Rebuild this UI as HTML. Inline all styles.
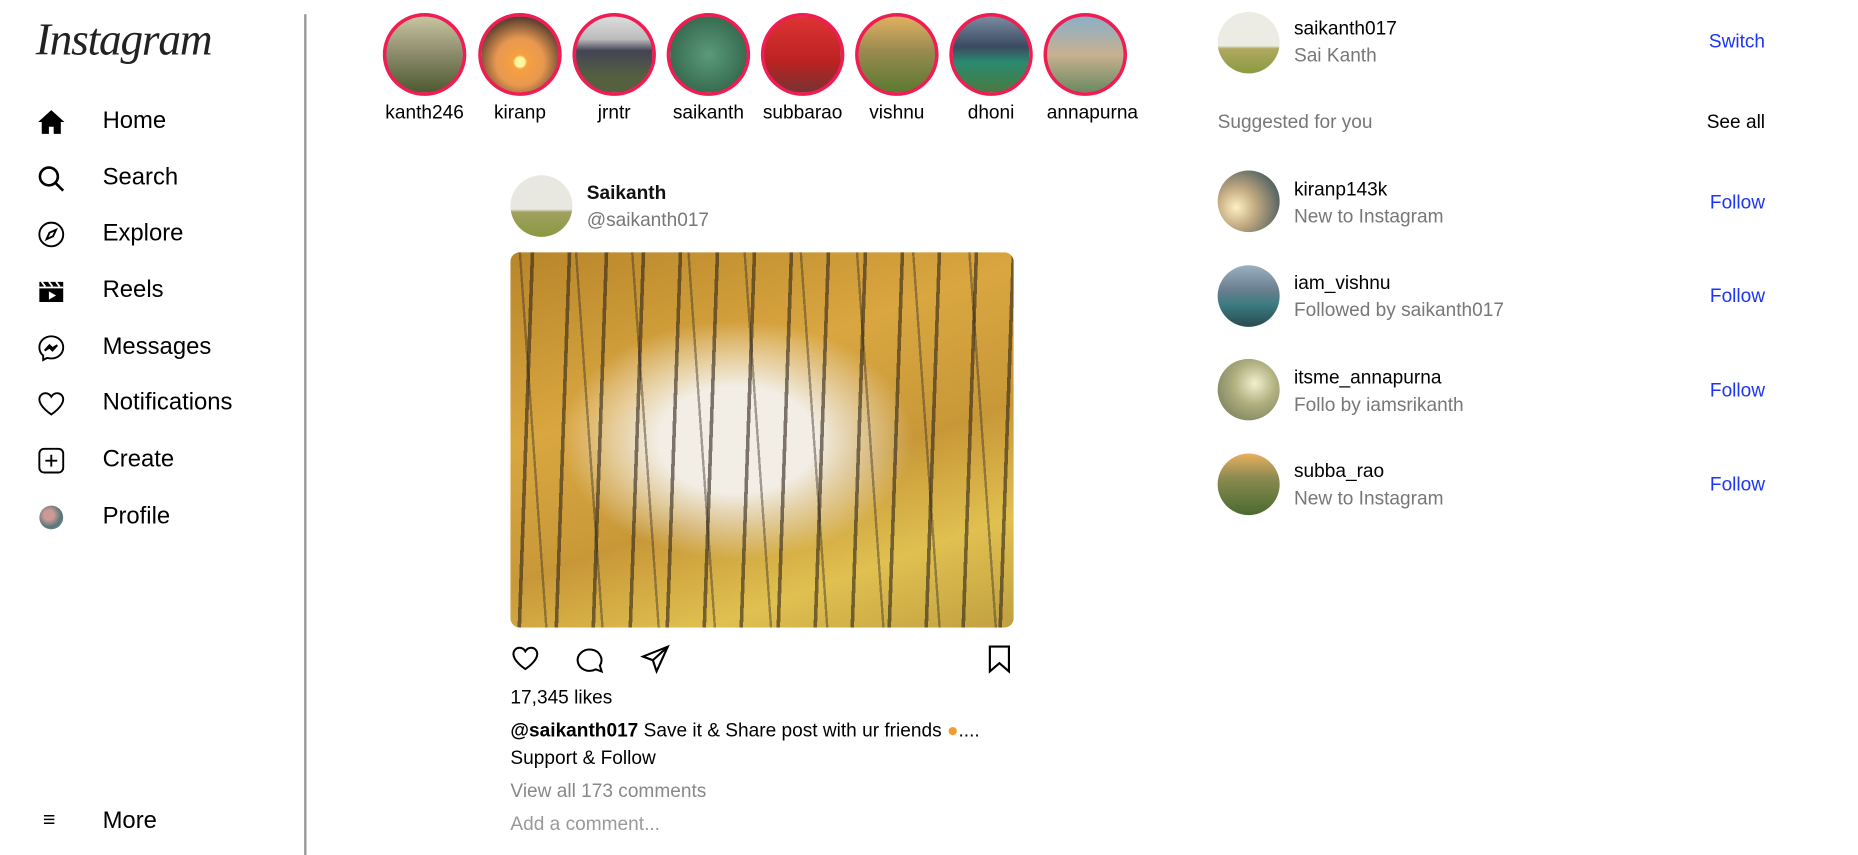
<!DOCTYPE html>
<html><head><meta charset="utf-8"><style>
html,body{margin:0;padding:0;background:#fff;width:1858px;height:855px;overflow:hidden}
#w{position:absolute;left:0;top:0;width:1558px;height:722px;transform:scale(1.1926,1.1842);transform-origin:0 0;font-family:"Liberation Sans",sans-serif;color:#000}
.a{position:absolute;white-space:nowrap}
.nav{font-size:20px;left:86px}
.ic{position:absolute;left:31px;width:24px;height:24px}
.st{position:absolute;top:11px;width:64px;height:64px;border-radius:50%;border:3px solid #ee1d52}
.sl{position:absolute;top:87px;font-size:16px;width:80px;text-align:center}
.f{font-family:"Liberation Sans",sans-serif}
.av{position:absolute;width:52px;height:52px;border-radius:50%}
.nm{font-size:16px;font-weight:bold;color:#111}
.sb{font-size:16px;color:#777}
.bl{font-size:16px;color:#1d35f5;right:78px}
</style></head><body><div id="w">
<div class="a" style="left:30px;top:12px;font-family:'Liberation Serif',serif;font-style:italic;font-size:38px;color:#222;letter-spacing:-1px">Instagram</div>
<div style="position:absolute;left:255px;top:12px;width:2px;height:710px;background:#999"></div>

<svg class="ic" style="top:91px" viewBox="0 0 24 24"><path d="M12 2L1 12h3v10h6v-6h4v6h6V12h3z"/></svg>
<div class="a nav" style="top:91px">Home</div>
<svg class="ic" style="top:139px" viewBox="0 0 24 24" fill="none" stroke="#000" stroke-width="2.2"><circle cx="10" cy="10" r="7.5"/><path d="M15.5 15.5L22 22"/></svg>
<div class="a nav" style="top:139px">Search</div>
<svg class="ic" style="top:186px" viewBox="0 0 24 24" fill="none" stroke="#000" stroke-width="1.6"><circle cx="12" cy="12" r="10"/><path d="M16 8l-2.5 5.5L8 16l2.5-5.5z"/></svg>
<div class="a nav" style="top:186px">Explore</div>
<svg class="ic" style="top:234px" viewBox="0 0 24 24"><path d="M2 4h20v17H2z"/><path d="M4 4l3 4M10 4l3 4M16 4l3 4" stroke="#fff" stroke-width="1.5"/><rect x="2" y="8" width="20" height="1.5" fill="#fff"/><path d="M10 12v7l6-3.5z" fill="#fff"/></svg>
<div class="a nav" style="top:234px">Reels</div>
<svg class="ic" style="top:282px" viewBox="0 0 24 24" fill="none" stroke="#000" stroke-width="1.6"><path d="M12 2C6.5 2 2 6 2 11.3c0 2.8 1.2 5.2 3.2 6.9V22l3.3-1.8c1.1.3 2.3.5 3.5.5 5.5 0 10-4 10-9.4S17.5 2 12 2z"/><path d="M6.5 14l4-4.5 2.5 2.5 4-2.5-4 4.5-2.5-2.5z"/></svg>
<div class="a nav" style="top:282px">Messages</div>
<svg class="ic" style="top:329px" viewBox="0 0 24 24" fill="none" stroke="#000" stroke-width="1.6"><path d="M12 21S2 14.5 2 8.3C2 5.3 4.3 3 7.1 3c2 0 3.8 1.2 4.9 3 1.1-1.8 2.9-3 4.9-3C19.7 3 22 5.3 22 8.3 22 14.5 12 21 12 21z"/></svg>
<div class="a nav" style="top:329px">Notifications</div>
<svg class="ic" style="top:377px" viewBox="0 0 24 24" fill="none" stroke="#000" stroke-width="1.6"><rect x="2" y="2" width="20" height="20" rx="4"/><path d="M12 7v10M7 12h10"/></svg>
<div class="a nav" style="top:377px">Create</div>
<div style="position:absolute;left:33px;top:427px;width:20px;height:20px;border-radius:50%;background:radial-gradient(circle at 40% 40%,#c99 0 25%,#577 60%,#89a)"></div>
<div class="a nav" style="top:425px">Profile</div>
<div class="a" style="left:36px;top:682px;font-size:18px">≡</div>
<div class="a nav" style="top:682px">More</div>

<div class="st" style="left:321px;background:linear-gradient(#c8c4a0,#8a8a6a 50%,#4d5a30)"></div>
<div class="st" style="left:401px;background:radial-gradient(circle at 50% 60%,#fff6a0 0 8%,#f6a040 12%,#e89850 40%,#5a4030 75%)"></div>
<div class="st" style="left:480px;background:linear-gradient(#ddd,#bbb 30%,#445 45%,#556040 80%)"></div>
<div class="st" style="left:559px;background:radial-gradient(#5a9a7a,#2a5a40)"></div>
<div class="st" style="left:638px;background:linear-gradient(#d33,#b22 60%,#733)"></div>
<div class="st" style="left:717px;background:linear-gradient(#e0b060,#9a8a50 45%,#5a7a30)"></div>
<div class="st" style="left:796px;background:linear-gradient(#7a8aa0,#3a4a60 40%,#2a8a70 60%,#4a7a40)"></div>
<div class="st" style="left:875px;background:linear-gradient(#8ab0c8,#c8b090 50%,#6a8a60)"></div>
<div class="sl f" style="left:316px">kanth246</div>
<div class="sl f" style="left:396px">kiranp</div>
<div class="sl f" style="left:475px">jrntr</div>
<div class="sl f" style="left:554px">saikanth</div>
<div class="sl f" style="left:633px">subbarao</div>
<div class="sl f" style="left:712px">vishnu</div>
<div class="sl f" style="left:791px">dhoni</div>
<div class="sl f" style="left:876px">annapurna</div>

<div class="av" style="left:428px;top:148px;background:linear-gradient(#e8e8e0 55%,#a0a060 60%,#8a9a40)"></div>
<div class="a nm" style="left:492px;top:155px">Saikanth</div>
<div class="a sb" style="left:492px;top:178px">@saikanth017</div>
<div style="position:absolute;left:428px;top:213px;width:422px;height:317px;border-radius:8px;background:
repeating-linear-gradient(92deg,transparent 0 17px,rgba(45,35,25,.6) 17px 20px,transparent 20px 31px),
repeating-linear-gradient(86deg,transparent 0 29px,rgba(60,50,40,.45) 29px 31px,transparent 31px 47px),
radial-gradient(ellipse at 45% 50%,#f2eee6 0 20%,transparent 45%),
linear-gradient(160deg,#b8862a,#d9a640 35%,#c89838 60%,#e0c050 80%,#c0a040)"></div>

<svg style="position:absolute;left:428px;top:544px" width="25" height="24" viewBox="0 0 24 24" fill="none" stroke="#000" stroke-width="1.7"><path d="M12 21S2 14.5 2 8.3C2 5.3 4.3 3 7.1 3c2 0 3.8 1.2 4.9 3 1.1-1.8 2.9-3 4.9-3C19.7 3 22 5.3 22 8.3 22 14.5 12 21 12 21z"/></svg>
<svg style="position:absolute;left:482px;top:545px" width="25" height="24" viewBox="0 0 24 24" fill="none" stroke="#000" stroke-width="1.7"><path d="M20.5 17A10 9 0 1 0 17 20.2L22 22z"/></svg>
<svg style="position:absolute;left:537px;top:544px" width="25" height="25" viewBox="0 0 24 24" fill="none" stroke="#000" stroke-width="1.7"><path d="M22 2L2 10l8 3 3 9zM10 13L22 2"/></svg>
<svg style="position:absolute;left:827px;top:544px" width="22" height="25" viewBox="0 0 22 25" fill="none" stroke="#000" stroke-width="1.8"><path d="M3 2h16v21l-8-7-8 7z"/></svg>
<div class="a f" style="left:428px;top:581px;font-size:16px">17,345 likes</div>
<div class="a f" style="left:428px;top:609px;font-size:16px"><b>@saikanth017</b> Save it &amp; Share post with ur friends <span style="color:#f39a30">●</span>....</div>
<div class="a f" style="left:428px;top:632px;font-size:16px">Support &amp; Follow</div>
<div class="a f" style="left:428px;top:660px;font-size:16px;color:#888">View all 173 comments</div>
<div class="a f" style="left:428px;top:688px;font-size:16px;color:#999">Add a comment...</div>

<div class="av" style="left:1021px;top:10px;background:linear-gradient(#ececE4 55%,#b0a860 60%,#8a9a40)"></div>
<div class="a" style="left:1085px;top:16px;font-size:16px">saikanth017</div>
<div class="a sb" style="left:1085px;top:39px">Sai Kanth</div>
<div class="a bl" style="top:27px">Switch</div>
<div class="a sb" style="left:1021px;top:95px">Suggested for you</div>
<div class="a" style="right:78px;top:95px;font-size:16px">See all</div>

<div class="av" style="left:1021px;top:144px;background:radial-gradient(circle at 30% 60%,#fff0c0,#c0a880 35%,#506060 80%)"></div>
<div class="a" style="left:1085px;top:152px;font-size:16px">kiranp143k</div>
<div class="a sb" style="left:1085px;top:175px">New to Instagram</div>
<div class="a bl" style="top:163px">Follow</div>
<div class="av" style="left:1021px;top:224px;background:linear-gradient(#9ab0c0,#6a8090 40%,#3a7a80 65%,#2a4a50)"></div>
<div class="a" style="left:1085px;top:231px;font-size:16px">iam_vishnu</div>
<div class="a sb" style="left:1085px;top:254px">Followed by saikanth017</div>
<div class="a bl" style="top:242px">Follow</div>
<div class="av" style="left:1021px;top:303px;background:radial-gradient(circle at 60% 40%,#f0f0d0,#b0b080 40%,#6a7050)"></div>
<div class="a" style="left:1085px;top:311px;font-size:16px">itsme_annapurna</div>
<div class="a sb" style="left:1085px;top:334px">Follo by iamsrikanth</div>
<div class="a bl" style="top:322px">Follow</div>
<div class="av" style="left:1021px;top:383px;background:linear-gradient(#e8b060,#8a8a50 40%,#4a6a30)"></div>
<div class="a" style="left:1085px;top:390px;font-size:16px">subba_rao</div>
<div class="a sb" style="left:1085px;top:413px">New to Instagram</div>
<div class="a bl" style="top:401px">Follow</div>
</div></body></html>
